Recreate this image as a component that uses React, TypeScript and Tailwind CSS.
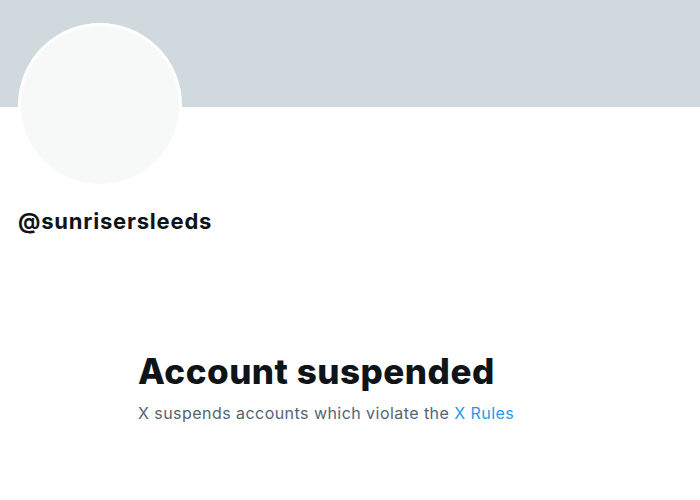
export default function App() {
  return (
    <div className="w-[700px] h-[500px] bg-white overflow-hidden" style={{ fontFamily: 'Inter, "Liberation Sans", sans-serif' }}>
      <div className="h-[107px] bg-[#cfd9de]" />
      <div className="px-[18px]">
        <div className="-mt-[84px] w-[164px] h-[164px] rounded-full bg-[#f7f9f9] border-[3px] border-white" />
        <div className="mt-[20px] text-[22px] font-bold text-[#0f1419] leading-[28px] tracking-[0.8px]">@sunrisersleeds</div>
      </div>
      <div className="mt-[115px] pl-[138px]">
        <h1 className="text-[35px] font-extrabold text-[#0f1419] leading-[42px] tracking-[0.5px]">Account suspended</h1>
        <p className="mt-[11px] text-[16px] text-[#536471] leading-[20px] tracking-[0.45px]">
          X suspends accounts which violate the <span className="text-[#1d9bf0]">X Rules</span>
        </p>
      </div>
    </div>
  )
}
